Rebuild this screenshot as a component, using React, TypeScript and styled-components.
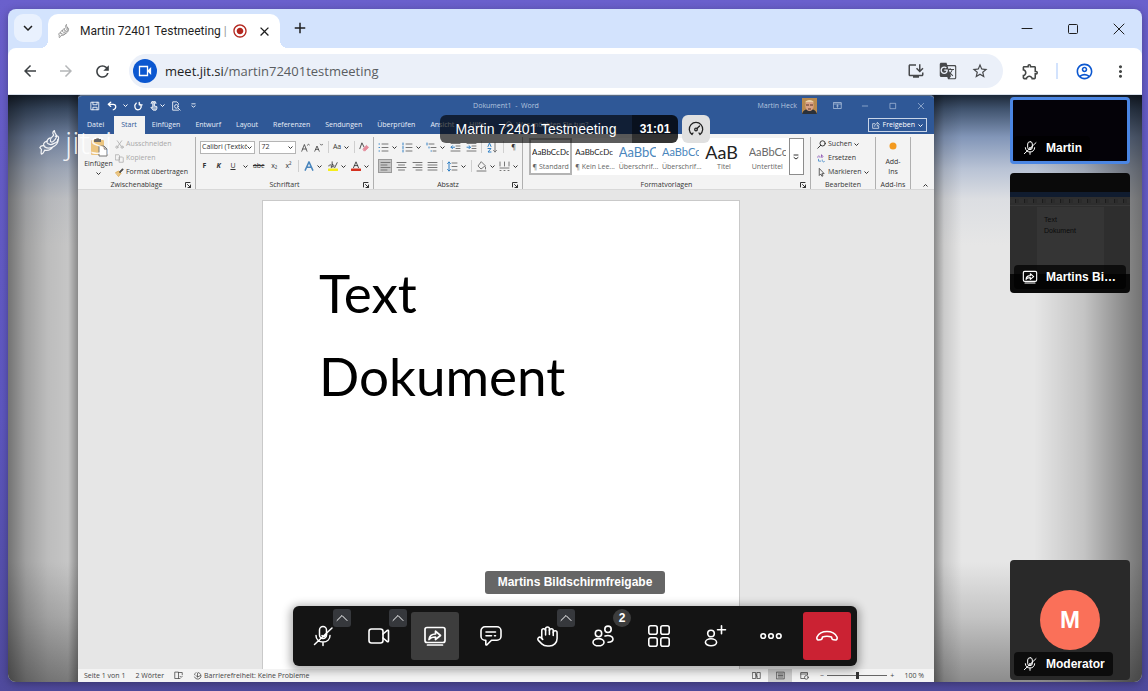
import React from "react";
import styled, { createGlobalStyle, css } from "styled-components";
import {
  MdArrowBack,
  MdArrowForward,
  MdRefresh,
  MdInstallDesktop,
  MdGTranslate,
  MdStarBorder,
  MdOutlineExtension,
  MdOutlineAccountCircle,
  MdMoreVert,
  MdKeyboardArrowDown,
  MdRadioButtonChecked,
  MdClose,
  MdAdd,
} from "react-icons/md";
import { Hand } from "lucide-react";

const ui = `"Open Sans", "Noto Sans", sans-serif`;
const meet = `"Liberation Sans", Arial, sans-serif`;

const GlobalStyle = createGlobalStyle`
  * { box-sizing: border-box; }
  body { margin: 0; font-family: ${ui}; background: #5a53b6; }
  button, input, select { font: inherit; color: inherit; margin: 0; }
  button { border: 0; padding: 0; background: none; cursor: pointer; }
  svg { display: block; flex: none; }
  h1, p, ul { margin: 0; padding: 0; font-weight: inherit; }
`;

/* ---------- window ---------- */

const Desktop = styled.div`
  height: 100vh;
  min-height: 480px;
  padding: 9px 6px 9px 8px;
  display: flex;
  background: linear-gradient(#6a60cc, #5e57c0 60%, #4f4a9c);
`;

const BrowserWindow = styled.div`
  flex: 1;
  min-width: 0;
  display: flex;
  flex-direction: column;
  border-radius: 8px;
  overflow: hidden;
  background: #d3e3fd;
  box-shadow: 0 2px 8px rgba(0, 0, 0, 0.3);
`;

const TabStrip = styled.header`
  height: 39px;
  flex: none;
  display: flex;
  align-items: flex-end;
  padding-left: 6px;
  color: #1f1f1f;
`;

const TabSearch = styled.button`
  width: 28px;
  height: 28px;
  margin: 0 6px 6px 0;
  border-radius: 9px;
  background: #e9f1fe;
  display: grid;
  place-items: center;
`;

const Tab = styled.div`
  position: relative;
  width: 232px;
  height: 34px;
  padding: 0 4px 0 10px;
  display: flex;
  align-items: center;
  gap: 4px;
  border-radius: 10px 10px 0 0;
  background: #fff;
  font-family: Roboto, "Open Sans", sans-serif;
  font-size: 12px;
  &::before,
  &::after {
    content: "";
    position: absolute;
    bottom: 0;
    width: 8px;
    height: 8px;
  }
  &::before {
    left: -8px;
    background: radial-gradient(circle at 0 0, transparent 8px, #fff 8px);
  }
  &::after {
    right: -8px;
    background: radial-gradient(circle at 100% 0, transparent 8px, #fff 8px);
  }
`;

const TabIcon = styled.span`
  color: #8a8a8a;
`;

const TabTitle = styled.span`
  flex: 1;
  margin-left: 4px;
  white-space: nowrap;
  i {
    font-style: normal;
    color: #9a9a9a;
  }
`;

const TabButton = styled.button`
  width: 24px;
  height: 24px;
  display: grid;
  place-items: center;
`;

const NewTab = styled(TabButton)`
  margin: 0 auto 8px 8px;
`;

const WindowControls = styled.div`
  align-self: stretch;
  display: flex;
`;

const WindowButton = styled.button`
  width: 46px;
  display: grid;
  place-items: center;
`;

const AddressRow = styled.div`
  height: 47px;
  flex: none;
  display: flex;
  align-items: center;
  padding: 0 10px;
  background: #fff;
  color: #444746;
  border-radius: 8px 8px 0 0;
  border-bottom: 1px solid #d9e0ea;
`;

const NavButton = styled.button<{ $dim?: boolean }>`
  width: 24px;
  height: 24px;
  margin-right: 12px;
  display: grid;
  place-items: center;
  color: ${(p) => (p.$dim ? "#b4b6b8" : "#3c4043")};
`;

const AddressBar = styled.div`
  flex: 1;
  height: 34px;
  margin-left: 3px;
  padding: 0 14px 0 4px;
  display: flex;
  align-items: center;
  gap: 12px;
  border-radius: 17px;
  background: #ebf0f9;
  color: #47494c;
  font-size: 13px;
`;

const SiteBadge = styled.button`
  width: 24px;
  height: 24px;
  margin-right: -4px;
  border-radius: 50%;
  background: #0b57d0;
  display: grid;
  place-items: center;
`;

const Url = styled.p`
  flex: 1;
  color: #5a5d61;
  b {
    font-weight: 400;
    color: #1f1f1f;
  }
`;

const PageActions = styled.div`
  display: flex;
  align-items: center;
  gap: 14px;
`;

const ToolButtons = styled.div`
  display: flex;
  align-items: center;
  gap: 12px;
  margin-left: 15px;
`;

const BarDivider = styled.span`
  width: 2px;
  height: 16px;
  margin: 0 2px;
  background: #d3e3fd;
`;

const Plain = styled.button<{ $blue?: boolean }>`
  width: 24px;
  height: 24px;
  display: grid;
  place-items: center;
  color: ${(p) => (p.$blue ? "#0b57d0" : "#444746")};
`;

/* ---------- meeting stage ---------- */

const Stage = styled.main`
  position: relative;
  flex: 1;
  min-height: 0;
  display: grid;
  grid-template-columns: 70px minmax(0, 1fr) 208px;
  background: linear-gradient(
    #1c2838 0,
    #40536e 14px,
    #8296b8 42px,
    #b9c3d5 74px,
    #dcdee2 104px,
    #e6e6e6 150px,
    #e6e6e6 calc(100% - 120px),
    #c4c4c4 calc(100% - 65px),
    #8c8c8c 100%
  );
`;

const LeftShade = styled.div`
  background: linear-gradient(
    to right,
    rgba(0, 0, 0, 0.5),
    rgba(0, 0, 0, 0.3) 18px,
    rgba(0, 0, 0, 0.18) 40px,
    rgba(0, 0, 0, 0.14) 60px,
    rgba(0, 0, 0, 0.4)
  );
`;

const Filmstrip = styled.aside`
  padding: 2px 12px 2px 76px;
  display: flex;
  flex-direction: column;
  gap: 9px;
  font-family: ${meet};
  background: linear-gradient(
    to right,
    rgba(0, 0, 0, 0.4),
    rgba(0, 0, 0, 0.12) 10px,
    rgba(0, 0, 0, 0) 28px,
    rgba(0, 0, 0, 0) 100px,
    rgba(0, 0, 0, 0.15) 150px,
    rgba(0, 0, 0, 0.5)
  );
`;

const Tile = styled.section<{ $active?: boolean; $short?: boolean; $last?: boolean }>`
  flex: none;
  height: ${(p) => (p.$short ? "67px" : "120px")};
  display: flex;
  flex-direction: column;
  position: relative;
  border-radius: 4px;
  overflow: hidden;
  background: ${(p) => (p.$active ? "#040208" : p.$last ? "#292929" : "#0a0a0a")};
  ${(p) =>
    p.$active &&
    css`
      border: 3px solid #4b86e3;
    `}
  ${(p) =>
    p.$last &&
    css`
      margin-top: auto;
      align-items: center;
      padding-top: 30px;
    `}
`;

const NameTag = styled.div<{ $inset?: boolean }>`
  position: absolute;
  left: ${(p) => (p.$inset ? "1px" : "4px")};
  bottom: ${(p) => (p.$inset ? "1px" : "4px")};
  max-width: 112px;
  height: 24px;
  padding: 0 8px;
  display: flex;
  align-items: center;
  gap: 8px;
  border-radius: 4px;
  background: rgba(0, 0, 0, 0.7);
  color: #fff;
  font-size: 12px;
  font-weight: 700;
  span {
    overflow: hidden;
    text-overflow: ellipsis;
    white-space: nowrap;
  }
`;

const Avatar = styled.div`
  width: 60px;
  height: 60px;
  border-radius: 50%;
  background: #fa7059;
  color: #fff;
  font-size: 24px;
  font-weight: 700;
  display: grid;
  place-items: center;
`;

const MiniScreen = styled.div`
  margin-top: 19px;
  border-top: 5px solid #101c2f;
  height: 82px;
  background: #2e2e2e;
  color: #0b0b0b;
  display: flex;
  flex-direction: column;
`;

const MiniRibbon = styled.div`
  height: 9px;
  border-bottom: 1px solid #383838;
  background: repeating-linear-gradient(to right, #303030 0 5px, #1c1c1c 5px 6px, #2b2b2b 6px 9px);
  background-size: 100% 4px;
  background-repeat: no-repeat;
  background-position: 0 2px;
`;

const MiniPage = styled.div`
  flex: 1;
  margin: 1px 26px 0 27px;
  padding: 7px 0 0 7px;
  background: #353535;
  font-size: 7px;
  line-height: 11px;
`;

const Overlay = styled.div<{ $top?: boolean }>`
  position: absolute;
  left: 0;
  right: 0;
  ${(p) => (p.$top ? "top: 20px;" : "bottom: 16px;")}
  display: flex;
  flex-direction: ${(p) => (p.$top ? "row" : "column")};
  align-items: center;
  justify-content: center;
  gap: ${(p) => (p.$top ? "4px" : "12px")};
  font-family: ${meet};
  color: #fff;
`;

const Subject = styled.div`
  height: 28px;
  display: flex;
  border-radius: 6px;
  overflow: hidden;
  font-size: 14px;
  line-height: 28px;
`;

const SubjectName = styled.h1`
  width: 192px;
  text-align: center;
  font-size: 14px;
  background: rgba(0, 0, 0, 0.64);
`;

const Timer = styled.span`
  width: 46px;
  text-align: center;
  font-size: 12px;
  font-weight: 700;
  background: rgba(0, 0, 0, 0.8);
`;

const Gauge = styled.button`
  width: 28px;
  height: 28px;
  border-radius: 6px;
  background: #e0e0e0;
  display: grid;
  place-items: center;
`;

const ShareLabel = styled.div`
  width: 180px;
  height: 23px;
  border-radius: 3px;
  background: #666;
  font-size: 12px;
  font-weight: 700;
  line-height: 22px;
  text-align: center;
`;

const CallBar = styled.nav`
  display: flex;
  gap: 8px;
  padding: 6px;
  border-radius: 6px;
  background: #141414;
  box-shadow: 0 2px 8px 3px rgba(0, 0, 0, 0.3);
`;

const CallSlot = styled.div`
  position: relative;
`;

const CallButton = styled.button<{ $on?: boolean; $end?: boolean }>`
  width: 48px;
  height: 48px;
  border-radius: 3px;
  display: grid;
  place-items: center;
  color: #fff;
  background: ${(p) => (p.$end ? "#cb2233" : p.$on ? "#3d3d3d" : "transparent")};
`;

const MoreToggle = styled.button`
  position: absolute;
  top: -3px;
  right: -4px;
  width: 18px;
  height: 18px;
  border-radius: 3px;
  background: #36383c;
  display: grid;
  place-items: center;
`;

const CountBadge = styled.span`
  position: absolute;
  top: -3px;
  right: -4px;
  width: 18px;
  height: 18px;
  border-radius: 50%;
  background: #3d3d3d;
  font-size: 12px;
  font-weight: 700;
  line-height: 18px;
  text-align: center;
`;

const Watermark = styled.a`
  position: absolute;
  left: 31px;
  top: 29px;
  display: flex;
  align-items: center;
  color: rgba(255, 255, 255, 0.9);
  font: 300 32px/36px "Open Sans", sans-serif;
  text-decoration: none;
`;

/* ---------- shared word processor ---------- */

const Word = styled.section`
  min-width: 0;
  display: flex;
  flex-direction: column;
  border-top: 1px solid #5a6a80;
  border-radius: 4px 4px 0 0;
  overflow: hidden;
  background: #e6e6e6;
  color: #333;
  font-size: 7px;
  line-height: 10px;
  white-space: nowrap;
`;

const TitleBar = styled.div`
  height: 19px;
  flex: none;
  display: grid;
  grid-template-columns: 1fr auto 1fr;
  align-items: center;
  background: #2f5897;
  color: #b4c5df;
`;

const QuickAccess = styled.div`
  padding-left: 11px;
  display: flex;
  align-items: center;
  color: #fff;
`;

const QuickButton = styled.button<{ $w: number }>`
  width: ${(p) => p.$w}px;
  height: 16px;
  display: grid;
  place-items: center;
`;

const TitleRight = styled.div`
  display: flex;
  align-items: center;
  justify-content: flex-end;
`;

const UserPhoto = styled.span`
  margin: 0 6px 0 5px;
`;

const MenuRow = styled.div`
  height: 19px;
  flex: none;
  display: flex;
  padding: 1px 7px 0 2px;
  background: #2f5897;
  color: #e9eff8;
`;

const MenuTab = styled.button<{ $on?: boolean }>`
  height: 18px;
  padding: 0 8px 0 7px;
  ${(p) =>
    p.$on &&
    css`
      margin: 0 0 0 2px;
      background: #f3f3f3;
      color: #2f5897;
    `}
`;

const TellMe = styled.span`
  display: flex;
  align-items: center;
  gap: 4px;
  padding-left: 12px;
`;

const ShareButton = styled.button`
  height: 14px;
  margin: 2px 0 0 auto;
  padding: 0 3px;
  display: flex;
  align-items: center;
  gap: 3px;
  border: 1px solid #c9d5e8;
  color: #fff;
`;

const Ribbon = styled.div`
  height: 56px;
  flex: none;
  display: flex;
  padding: 3px 0 0;
  background: #f3f3f3;
  border-bottom: 1px solid #d8d8d8;
`;

const Group = styled.div<{ $w?: number }>`
  ${(p) => (p.$w ? `flex: 0 0 ${p.$w}px;` : "flex: 1 1 0;")}
  min-width: 0;
  display: flex;
  flex-direction: column;
  border-right: 1px solid #b0b0b0;
`;

const GroupBody = styled.div<{ $pad?: number }>`
  flex: 1;
  min-height: 0;
  display: flex;
  padding: 0 ${(p) => p.$pad ?? 4}px;
`;

const GroupLabel = styled.div<{ $plain?: boolean }>`
  height: 9px;
  line-height: 9px;
  display: grid;
  grid-template-columns: ${(p) => (p.$plain ? "1fr" : "10px 1fr 10px")};
  align-items: center;
  text-align: center;
`;

const GroupName = styled.span`
  grid-column: ${(p: { $plain?: boolean }) => (p.$plain ? 1 : 2)};
`;

const Rows = styled.div<{ $gap?: number }>`
  flex: 1;
  min-width: 0;
  display: flex;
  flex-direction: column;
  gap: ${(p) => p.$gap ?? 0}px;
`;

const ToolRow = styled.div`
  height: 14px;
  display: flex;
  align-items: center;
  justify-content: space-between;
  margin-top: 3px;
`;

const BigButton = styled.button`
  flex: 0 0 33px;
  display: flex;
  flex-direction: column;
  align-items: center;
  gap: 2px;
`;

const AddInsButton = styled(BigButton)`
  flex: 1;
`;

const TextCommand = styled.button<{ $off?: boolean }>`
  height: 14px;
  display: flex;
  align-items: center;
  gap: 2px;
  color: ${(p) => (p.$off ? "#a8a8a8" : "#333")};
`;

const Tool = styled.button<{ $on?: boolean }>`
  height: 14px;
  min-width: 9px;
  display: flex;
  align-items: center;
  justify-content: center;
  gap: 3px;
  ${(p) =>
    p.$on &&
    css`
      min-width: 14px;
      background: #c6c6c6;
      outline: 1px solid #9a9a9a;
      outline-offset: -1px;
    `}
`;

const Rule = styled.span`
  width: 1px;
  height: 12px;
  background: #cfcfcf;
`;

const SelectBox = styled.label<{ $w: number }>`
  width: ${(p) => p.$w}px;
  height: 13px;
  display: flex;
  align-items: center;
  padding-right: 2px;
  border: 1px solid #b5b5b5;
  background: #fff;
  select {
    flex: 1;
    min-width: 0;
    height: 11px;
    padding: 0 0 0 1px;
    border: 0;
    appearance: none;
    background: none;
    text-overflow: clip;
  }
`;

const Gallery = styled.div`
  flex: 1;
  min-width: 0;
  height: 37px;
  margin-top: 1px;
  display: flex;
  background: #fff;
`;

const StyleCard = styled.button<{ $on?: boolean }>`
  flex: 1 1 0;
  min-width: 0;
  padding: 0 3px;
  overflow: hidden;
  ${(p) =>
    p.$on &&
    css`
      outline: 2px solid #b4b4b4;
      outline-offset: -2px;
    `}
`;

const Sample = styled.span<{ $size: number; $color: string }>`
  display: block;
  height: 20px;
  overflow: hidden;
  line-height: 22px;
  text-align: left;
  font-family: Lato, sans-serif;
  font-size: ${(p) => p.$size}px;
  color: ${(p) => p.$color};
`;

const SampleName = styled.span`
  display: block;
  line-height: 12px;
  color: #666;
`;

const GalleryMore = styled.button`
  width: 15px;
  border: 1px solid #8c8c8c;
  display: grid;
  place-items: center;
`;

const CollapseRibbon = styled.button`
  flex: 0 0 23px;
  padding: 0 0 1px 12px;
  display: flex;
  align-items: flex-end;
`;

const DocumentArea = styled.div`
  flex: 1;
  min-height: 0;
  display: flex;
  justify-content: center;
  padding: 10px 10px 0 0;
  overflow: hidden;
`;

const Page = styled.article`
  flex: 0 1 478px;
  padding: 50px 0 0 56px;
  border: 1px solid #c9c9c9;
  border-bottom: 0;
  background: #fff;
  color: #000;
  font-family: Lato, Carlito, sans-serif;
  font-size: 53px;
  line-height: 83px;
`;

const StatusBar = styled.footer`
  height: 13px;
  flex: none;
  display: flex;
  align-items: center;
  gap: 10px;
  padding: 0 10px 0 6px;
  background: #f3f3f3;
  color: #444;
`;

const StatusItem = styled.span`
  display: flex;
  align-items: center;
  gap: 2px;
`;

const ViewButtons = styled.div`
  margin-left: auto;
  display: flex;
`;

const ViewButton = styled.button<{ $on?: boolean }>`
  width: 24px;
  height: 13px;
  display: grid;
  place-items: center;
  background: ${(p) => (p.$on ? "#cdcdcd" : "transparent")};
`;

const Zoom = styled.label`
  display: flex;
  align-items: center;
  gap: 3px;
  margin-left: -6px;
  input {
    width: 60px;
    height: 9px;
    appearance: none;
    background: linear-gradient(#666, #666) center / 100% 1px no-repeat;
  }
  input::-webkit-slider-thumb {
    appearance: none;
    width: 3px;
    height: 7px;
    background: #333;
  }
`;

/* ---------- icons ---------- */

type IconProps = { size?: number; box?: number; w?: number; children: React.ReactNode };

const Line = ({ size = 10, box = 12, w = 1, children }: IconProps) => (
  <svg
    width={size}
    height={size}
    viewBox={`0 0 ${box} ${box}`}
    fill="none"
    stroke="currentColor"
    strokeWidth={w}
    strokeLinecap="round"
    strokeLinejoin="round"
    aria-hidden="true"
  >
    {children}
  </svg>
);

const Chev = ({ up }: { up?: boolean }) => (
  <svg width="5" height="5" viewBox="0 0 5 5" fill="none" stroke="currentColor" aria-hidden="true">
    <path d={up ? "M.5 3.5l2-2 2 2" : "M.5 1.5l2 2 2-2"} />
  </svg>
);

const Launcher = () => (
  <Line size={6} box={6}>
    <path d="M.5 5V.5H5M2.5 2.5L5.5 5.5M5.5 3v2.5H3" />
  </Line>
);

const MicOff = ({ size = 24 }: { size?: number }) => (
  <Line size={size} box={24} w={1.5}>
    <rect x="8.5" y="2.500" width="7" height="12" rx="3.5" />
    <path d="M5 11.5c0 4 3 6.5 7 6.5s7-2.5 7-6.5M12 18v3.5M11 11.5c1.5 2 3.5 1 4.5-1M21 4L3.5 20.5" />
  </Line>
);

const ShareScreen = ({ size = 24 }: { size?: number }) => (
  <Line size={size} box={24} w={1.7}>
    <rect x="2" y="3.5" width="20" height="15" rx="2" />
    <path d="M4.5 21h15M6 15.5c.5-4 3-5.500 6.500-5.500V7.200l5 4.300-5 4V13c-3 0-5 .5-6.500 2.500z" />
  </Line>
);

const Camera = () => (
  <Line size={24} box={24} w={1.6}>
    <rect x="2" y="5" width="14" height="14" rx="2.5" />
    <path d="M16 10l4.3-3.6c.6-.4 1.2-.1 1.2.6v10c0 .7-.6 1-1.2.6L16 14" />
  </Line>
);

const ChatBubble = () => (
  <Line size={24} box={24} w={1.6}>
    <path d="M6 2.800h12a4 4 0 0 1 4 4v5.400a4 4 0 0 1-4 4h-5.500L8 20.800c-.5.500-1.200.2-1.200-.5v-4.100H6a4 4 0 0 1-4-4V6.800a4 4 0 0 1 4-4zM7 8h9.500M7 11.700h5.500M15.500 11.700h1" />
  </Line>
);

const People = () => (
  <Line size={24} box={24} w={1.6}>
    <circle cx="7.5" cy="9.5" r="3.2" />
    <ellipse cx="7.5" cy="18.2" rx="5.5" ry="3.6" />
    <circle cx="17" cy="5.3" r="3.2" />
    <path d="M14 12c4-1.500 8 .3 8 3 0 2-2 3.200-5 3.200" />
  </Line>
);

const TileGrid = () => (
  <Line size={24} box={24} w={1.6}>
    <rect x="1.8" y="1.8" width="8.4" height="8.4" rx="2" />
    <rect x="13.8" y="1.8" width="8.4" height="8.4" rx="2" />
    <rect x="1.8" y="13.8" width="8.4" height="8.4" rx="2" />
    <rect x="13.8" y="13.8" width="8.4" height="8.4" rx="2" />
  </Line>
);

const Invite = () => (
  <Line size={24} box={24} w={1.6}>
    <circle cx="8" cy="9.5" r="3.3" />
    <ellipse cx="8" cy="18.3" rx="5.6" ry="3.5" />
    <path d="M18.5 1.8v8M14.5 5.8h8" />
  </Line>
);

const Dots = () => (
  <Line size={24} box={24} w={1.6}>
    <circle cx="4.2" cy="12" r="2.3" />
    <circle cx="12" cy="12" r="2.3" />
    <circle cx="19.8" cy="12" r="2.3" />
  </Line>
);

const HangUp = () => (
  <Line size={24} box={24} w={1.6}>
    <path d="M2 13C4 9 8 7.500 12 7.500s8 1.500 10 5.500c.5 1 0 3-1.300 3l-2.200-.2c-1-.1-1.500-.7-1.700-1.500l-.3-1.300c-3-1-6-1-9 0l-.3 1.300c-.2.8-.7 1.400-1.700 1.500L3.300 16C2 16 1.500 14 2 13z" />
  </Line>
);

const Bird = ({ size = 32, w = 1.2 }: { size?: number; w?: number }) => (
  <Line size={size} box={32} w={w}>
    <path d="M19 2c-3 2-2 4-1 5s-4 3-4 7c0 2 2 3 4 1s5-5 3-8-2-3-2-5z" />
    <path d="M14 11c-3 1-5 3-4 6 1 2 5 3 8 1 3-1 7-3 6-8-1-2-3-2-4-1" />
    <path d="M10 15c-4 1-6 4-3 7 3 2 8 2 12-1 3-2 5-5 4-8M7 21c-3-1-5 0-6 2l2 2c0 2-1 4 0 6 2 0 3-3 4-5 4 1 8-1 10-4" />
  </Line>
);

const Lines = ({ d, on }: { d: string; on?: string }) => (
  <Line size={11} box={11}>
    <path d={d} stroke="#777" />
    {on && <path d={on} stroke="#2f7fc4" />}
  </Line>
);

const Lens = ({ size = 9 }: { size?: number }) => (
  <Line size={size} box={12} w={1.3}>
    <circle cx="7.5" cy="4.5" r="3.5" />
    <path d="M5 7L1 11" />
  </Line>
);

/* ---------- content ---------- */

const menuTabs = [
  "Datei",
  "Start",
  "Einfügen",
  "Entwurf",
  "Layout",
  "Referenzen",
  "Sendungen",
  "Überprüfen",
  "Ansicht",
  "Hilfe",
];

const styleCards = [
  { sample: "AaBbCcDc", name: "¶ Standard", size: 8, color: "#222" },
  { sample: "AaBbCcDc", name: "¶ Kein Lee...", size: 8, color: "#222" },
  { sample: "AaBbC", name: "Überschrif...", size: 13, color: "#4a86bd" },
  { sample: "AaBbCc", name: "Überschrif...", size: 11, color: "#4a86bd" },
  { sample: "AaB", name: "Titel", size: 18, color: "#222" },
  { sample: "AaBbCc", name: "Untertitel", size: 11, color: "#6a6a6a" },
];

const WordTitle = () => (
  <TitleBar>
    <QuickAccess>
      <QuickButton $w={12} aria-label="Speichern">
        <Line><path d="M1.5 1.5h9v9h-9zM3.5 1.5v3h5v-3M3.5 10.5v-3h5v3" /></Line>
      </QuickButton>
      <QuickButton $w={22} aria-label="Rückgängig">
        <Line><path d="M4.5 1.5L1.5 4l3 2.5M1.5 4h6c4 0 4 5.5 0 6.5" strokeWidth="1.5" /></Line>
      </QuickButton>
      <Chev />
      <QuickButton $w={20} aria-label="Wiederholen">
        <Line><path d="M7.500 4.500H11M7.500 4.500V1.500M8 3.500C11.500 6 9.500 10.500 6 10.500S.5 5.500 4 2.500" strokeWidth="1.5" /></Line>
      </QuickButton>
      <QuickButton $w={12} aria-label="Touchmodus">
        <Line><path d="M4.5 7V2.500a1 1 0 0 1 2 0V6l3 .8v2l-1 2.200H5L2.500 8zM2.500 3a3 3 0 0 1 6 0" fill="currentColor" fillOpacity=".5" /></Line>
      </QuickButton>
      <Chev />
      <QuickButton $w={22} aria-label="Seitenansicht">
        <Line><path d="M9 11H2V1h5l2 2v1" /><circle cx="6.5" cy="6.5" r="2.2" /><path d="M8.5 8.5l2.5 2.5" /></Line>
      </QuickButton>
      <QuickButton $w={12} aria-label="Anpassen">
        <Line size={5} box={6}><path d="M1 1h4M1 3.5L3 5l2-1.5" /></Line>
      </QuickButton>
    </QuickAccess>
    <span>Dokument1&nbsp; -&nbsp; Word</span>
    <TitleRight>
      Martin Heck
      <UserPhoto>
        <svg width="15" height="16" viewBox="0 0 15 16" aria-hidden="true">
          <rect width="15" height="16" fill="#b98a4e" />
          <path d="M0 16c1-4 4-5 7.500-5s6.500 1 7.500 5z" fill="#2b3038" />
          <ellipse cx="7.500" cy="7.500" rx="4.200" ry="5.500" fill="#d9a184" />
          <path d="M3 4.500C4 1 11 1 12 4.500L10 4H5z" fill="#e9cfa6" />
          <path d="M4 7h3M8 7h3M6 11h3" stroke="#5b3328" />
        </svg>
      </UserPhoto>
      <QuickButton $w={28} aria-label="Menübandanzeige">
        <Line size={9}><path d="M1 2h10v8H1zM1 4h10M6 8.500V5.500M4.800 6.500L6 5.500l1.200 1" /></Line>
      </QuickButton>
      <QuickButton $w={28} aria-label="Minimieren"><Line size={8}><path d="M2 6h8" /></Line></QuickButton>
      <QuickButton $w={28} aria-label="Maximieren"><Line size={8}><path d="M2 2h8v8H2z" /></Line></QuickButton>
      <QuickButton $w={27} aria-label="Schließen"><Line size={8}><path d="M2 2l8 8M10 2l-8 8" /></Line></QuickButton>
    </TitleRight>
  </TitleBar>
);

const Clipboard = () => (
  <Group $w={118}>
    <GroupBody>
      <BigButton>
        <svg width="20" height="20" viewBox="0 0 20 20" aria-hidden="true">
          <rect x="2" y="3" width="13" height="15" rx="1" fill="#ecc580" />
          <path d="M5 5V2h2c0-2 3-2 3 0h2v3z" fill="#666" />
          <path d="M10 9h5l3 3v7h-8z" fill="#fff" stroke="#777" />
          <path d="M15 9v3h3" fill="none" stroke="#777" />
        </svg>
        Einfügen
        <Chev />
      </BigButton>
      <Rows>
        <TextCommand $off>
          <Line size={9}><path d="M3 1l5 7M9 1L4 8" /><circle cx="2.5" cy="9.5" r="1.5" /><circle cx="9.5" cy="9.5" r="1.5" /></Line>
          Ausschneiden
        </TextCommand>
        <TextCommand $off>
          <Line size={9}><path d="M1 1h4l1 1v6H1zM6 4h4l1 1v6H6z" /></Line>
          Kopieren
        </TextCommand>
        <TextCommand>
          <Line size={9}><path d="M1 6l4-2 3 3-3 4z" fill="#ecc580" stroke="#d9a441" /><path d="M6 5l4-4 1 1-4 4z" fill="#555" /></Line>
          Format übertragen
        </TextCommand>
      </Rows>
    </GroupBody>
    <GroupLabel><GroupName>Zwischenablage</GroupName><Launcher /></GroupLabel>
  </Group>
);

const FontGroup = () => (
  <Group $w={178}>
    <GroupBody>
      <Rows $gap={2}>
        <ToolRow>
          <SelectBox $w={55}>
            <select aria-label="Schriftart" defaultValue="c"><option value="c">Calibri (Textkö</option></select>
            <Chev />
          </SelectBox>
          <SelectBox $w={37}>
            <select aria-label="Schriftgrad" defaultValue="72"><option>72</option></select>
            <Chev />
          </SelectBox>
          <Tool aria-label="Vergrößern"><Line size={9}><path d="M1 11l3.500-9L8 11M2.300 8h4.500M8.500 3L10 1.500 11.500 3" /></Line></Tool>
          <Tool aria-label="Verkleinern"><Line size={9}><path d="M1 11l3-7 3 7M2.300 8.500h3.500M8.500 1.500L10 3l1.500-1.500" /></Line></Tool>
          <Rule />
          <Tool>Aa <Chev /></Tool>
          <Rule />
          <Tool aria-label="Formatierung löschen">
            <Line><path d="M1 8l2.500-7L6 6" /><path d="M5 8l4-4 2.500 2.500-4 4H6z" fill="#e58b9b" stroke="#e58b9b" /></Line>
          </Tool>
        </ToolRow>
        <ToolRow>
          <Tool><b>F</b></Tool>
          <Tool><b><i>K</i></b></Tool>
          <Tool><u>U</u></Tool>
          <Chev />
          <Tool><s>abc</s></Tool>
          <Tool>x₂</Tool>
          <Tool>x²</Tool>
          <Rule />
          <Tool aria-label="Texteffekte">
            <Line><path d="M1.5 11L6 1l4.5 10M3.5 7.5h5" stroke="#4a86bd" strokeWidth="1.8" /></Line>
            <Chev />
          </Tool>
          <Tool aria-label="Texthervorhebung">
            <Line><path d="M1 10.5h10" stroke="#f6ee1a" strokeWidth="3" /><path d="M1 6c0-2 3-2 3 0v2M5 1v6c3 1 3-3 0-3M8 8l3-6" /></Line>
            <Chev />
          </Tool>
          <Tool aria-label="Schriftfarbe">
            <Line><path d="M1 10.5h10" stroke="#d4301f" strokeWidth="3" /><path d="M3 8l3-7 3 7M4 5.5h4" /></Line>
            <Chev />
          </Tool>
        </ToolRow>
      </Rows>
    </GroupBody>
    <GroupLabel><GroupName>Schriftart</GroupName><Launcher /></GroupLabel>
  </Group>
);

const ParagraphGroup = () => (
  <Group $w={149}>
    <GroupBody>
      <Rows $gap={2}>
        <ToolRow>
          <Tool aria-label="Aufzählung"><Lines d="M4 2h6M4 5.5h6M4 9h6" on="M1 2h.5M1 5.5h.5M1 9h.5" /><Chev /></Tool>
          <Tool aria-label="Nummerierung"><Lines d="M4 2h6M4 5.5h6M4 9h6" on="M1 1v2M1 4.5v2M1 8v2" /><Chev /></Tool>
          <Tool aria-label="Liste"><Lines d="M3 2h5M5 5.5h5M7 9h3" on="M1 1v2M3 5v1M5 9h.5" /><Chev /></Tool>
          <Tool aria-label="Einzug verkleinern"><Lines d="M1 1.5h9M6 4h4M6 6.5h4M1 9h9" on="M4.5 5.2H1l1.5-1.5M1 5.2l1.5 1.5" /></Tool>
          <Tool aria-label="Einzug vergrößern"><Lines d="M1 1.5h9M6 4h4M6 6.5h4M1 9h9" on="M1 5.2h3.5L3 3.7M4.5 5.2L3 6.7" /></Tool>
          <Rule />
          <Tool aria-label="Sortieren"><Lines d="M8 1v9M6.5 8.5L8 10l1.5-1.5" on="M1 4.5L2.5 1 4 4.5M1 6.5h3l-3 3.5h3" /></Tool>
          <Rule />
          <Tool>¶</Tool>
        </ToolRow>
        <ToolRow>
          <Tool $on aria-label="Linksbündig"><Lines d="M1 1.5h9M1 4h6M1 6.5h9M1 9h6" /></Tool>
          <Tool aria-label="Zentriert"><Lines d="M1 1.5h9M2.5 4h6M1 6.5h9M2.5 9h6" /></Tool>
          <Tool aria-label="Rechtsbündig"><Lines d="M1 1.5h9M4 4h6M1 6.5h9M4 9h6" /></Tool>
          <Tool aria-label="Blocksatz"><Lines d="M1 1.5h9M1 4h9M1 6.5h9M1 9h9" /></Tool>
          <Rule />
          <Tool aria-label="Zeilenabstand"><Lines d="M5 2h5M5 5.5h5M5 9h5" on="M2 1v9M.5 2.5L2 1l1.5 1.5M.5 8.5L2 10l1.5-1.5" /><Chev /></Tool>
          <Rule />
          <Tool aria-label="Schattierung"><Lines d="M5 1L2 5l3 3 4-3zM9.5 6v2M1 10h9" /><Chev /></Tool>
          <Tool aria-label="Rahmen"><Lines d="M1 1v4M5.5 1v4M10 1v4M1 7h9M1 9.5h1M5 9.5h1M9 9.5h1" /><Chev /></Tool>
        </ToolRow>
      </Rows>
    </GroupBody>
    <GroupLabel><GroupName>Absatz</GroupName><Launcher /></GroupLabel>
  </Group>
);

const WordRibbon = () => (
  <Ribbon>
    <Clipboard />
    <FontGroup />
    <ParagraphGroup />
    <Group>
      <GroupBody $pad={6}>
        <Gallery>
          {styleCards.map((c, i) => (
            <StyleCard key={i} $on={i === 0}>
              <Sample $size={c.size} $color={c.color}>{c.sample}</Sample>
              <SampleName>{c.name}</SampleName>
            </StyleCard>
          ))}
          <GalleryMore aria-label="Mehr"><Line size={6} box={6}><path d="M1 1h4M1 3.5L3 5l2-1.5" /></Line></GalleryMore>
        </Gallery>
      </GroupBody>
      <GroupLabel><GroupName>Formatvorlagen</GroupName><Launcher /></GroupLabel>
    </Group>
    <Group $w={65}>
      <GroupBody $pad={6}>
        <Rows>
          <TextCommand><Lens />Suchen <Chev /></TextCommand>
          <TextCommand>
            <Line size={9}><path d="M1 4.500c0-3 3-3 3 0M6 1v3.500c3 0 3-2.500 0-2.500" stroke="#8a4fb0" /><path d="M2 7v2.500h3M7 8c0 3 2 3 3 2" stroke="#2f7fc4" /></Line>
            Ersetzen
          </TextCommand>
          <TextCommand>
            <Line size={9}><path d="M3 1v9l2-2 1.500 3L8 10.500 6.500 7.500H9z" /></Line>
            Markieren <Chev />
          </TextCommand>
        </Rows>
      </GroupBody>
      <GroupLabel $plain><GroupName $plain>Bearbeiten</GroupName></GroupLabel>
    </Group>
    <Group $w={35}>
      <GroupBody>
        <AddInsButton>
          <svg width="18" height="18" viewBox="0 0 18 18" aria-hidden="true"><circle cx="9" cy="9" r="3.5" fill="#f39a1f" /></svg>
          <span>Add-<br />Ins</span>
        </AddInsButton>
      </GroupBody>
      <GroupLabel $plain><GroupName $plain>Add-Ins</GroupName></GroupLabel>
    </Group>
    <CollapseRibbon aria-label="Menüband reduzieren"><Chev up /></CollapseRibbon>
  </Ribbon>
);

const SharedScreen = () => (
  <Word>
    <WordTitle />
    <MenuRow>
      {menuTabs.map((t) => (
        <MenuTab key={t} $on={t === "Start"}>{t}</MenuTab>
      ))}
      <TellMe><Lens size={8} />Was möchten Sie tun?</TellMe>
      <ShareButton>
        <Line size={8}><path d="M4 4H1v7h9V8M4 8c0-3 2-4 4-4V2l3 3-3 3V6" /></Line>
        Freigeben
        <Chev />
      </ShareButton>
    </MenuRow>
    <WordRibbon />
    <DocumentArea>
      <Page>
        <p>Text</p>
        <p>Dokument</p>
      </Page>
    </DocumentArea>
    <StatusBar>
      <span>Seite 1 von 1</span>
      <span>2 Wörter</span>
      <StatusItem><Line size={9}><path d="M6 2v8H1V2zM6 2h5v3M6 10h2M8 7l1.5 1.5L11 7" /></Line></StatusItem>
      <StatusItem>
        <Line size={9}><path d="M7 2a4.500 4.500 0 1 1-5 6M2 5a5 5 0 0 1 2-3M6 3v5M4 6l2 2 4-2" /></Line>
        Barrierefreiheit: Keine Probleme
      </StatusItem>
      <ViewButtons>
        <ViewButton aria-label="Lesemodus"><Line size={9}><path d="M1 2h4v8H1zM7 2h4v8H7zM5 4l2 4" /></Line></ViewButton>
        <ViewButton $on aria-label="Seitenlayout"><Line size={9}><path d="M1 1.5h10v9H1zM3 4h6M3 6h6M3 8h6" /></Line></ViewButton>
        <ViewButton aria-label="Weblayout"><Line size={9}><path d="M6 10H1V2h9v3M1 4h9" /><circle cx="8.5" cy="8.5" r="2.5" /></Line></ViewButton>
      </ViewButtons>
      <Zoom>
        −
        <input type="range" min={0} max={200} defaultValue={100} aria-label="Zoom" />
        +
      </Zoom>
      <span>100 %</span>
    </StatusBar>
  </Word>
);

type CallItem = {
  label: string;
  icon: React.ReactNode;
  more?: boolean;
  on?: boolean;
  end?: boolean;
  count?: number;
};

const callButtons: CallItem[] = [
  { label: "Mikrofon", icon: <MicOff />, more: true },
  { label: "Kamera", icon: <Camera />, more: true },
  { label: "Bildschirmfreigabe", icon: <ShareScreen />, on: true },
  { label: "Chat", icon: <ChatBubble /> },
  { label: "Hand heben", icon: <Hand size={23} strokeWidth={1.6} />, more: true },
  { label: "Anwesende", icon: <People />, count: 2 },
  { label: "Kachelansicht", icon: <TileGrid /> },
  { label: "Einladen", icon: <Invite /> },
  { label: "Weitere Aktionen", icon: <Dots /> },
  { label: "Auflegen", icon: <HangUp />, end: true },
];

export default function App() {
  return (
    <Desktop>
      <GlobalStyle />
      <BrowserWindow>
        <TabStrip>
          <TabSearch aria-label="Tabs durchsuchen"><MdKeyboardArrowDown size={18} /></TabSearch>
          <Tab>
            <TabIcon><Bird size={14} w={2} /></TabIcon>
            <TabTitle>Martin 72401 Testmeeting <i>|</i></TabTitle>
            <MdRadioButtonChecked size={16} color="#b3261e" />
            <TabButton aria-label="Tab schließen"><MdClose size={15} /></TabButton>
          </Tab>
          <NewTab aria-label="Neuer Tab"><MdAdd size={18} /></NewTab>
          <WindowControls>
            <WindowButton aria-label="Minimieren"><Line size={12}><path d="M1 5.5h10" /></Line></WindowButton>
            <WindowButton aria-label="Maximieren"><Line size={12}><rect x="1.5" y="1.5" width="9" height="9" rx="1" /></Line></WindowButton>
            <WindowButton aria-label="Schließen"><Line size={12}><path d="M1 1l10 10M11 1L1 11" /></Line></WindowButton>
          </WindowControls>
        </TabStrip>
        <AddressRow>
          <NavButton aria-label="Zurück"><MdArrowBack size={18} /></NavButton>
          <NavButton $dim aria-label="Vorwärts"><MdArrowForward size={18} /></NavButton>
          <NavButton aria-label="Neu laden"><MdRefresh size={19} /></NavButton>
          <AddressBar>
            <SiteBadge aria-label="Kamera wird verwendet">
              <svg width="14" height="12" viewBox="0 0 14 12" fill="none" stroke="#fff" strokeWidth="1.3" aria-hidden="true">
                <path d="M1.500 1.500h8v9h-8z" />
                <path d="M10.500 5.500L12.500 3.500v5L10.500 6.500z" fill="#fff" />
              </svg>
            </SiteBadge>
            <Url><b>meet.jit.si</b>/martin72401testmeeting</Url>
            <PageActions>
              <MdInstallDesktop size={18} />
              <MdGTranslate size={18} />
              <MdStarBorder size={18} />
            </PageActions>
          </AddressBar>
          <ToolButtons>
            <Plain aria-label="Erweiterungen"><MdOutlineExtension size={19} /></Plain>
            <BarDivider />
            <Plain $blue aria-label="Profil"><MdOutlineAccountCircle size={19} /></Plain>
            <Plain aria-label="Menü"><MdMoreVert size={19} /></Plain>
          </ToolButtons>
        </AddressRow>
        <Stage>
          <LeftShade />
          <SharedScreen />
          <Filmstrip>
            <Tile $active $short>
              <NameTag $inset><MicOff size={16} /><span>Martin</span></NameTag>
            </Tile>
            <Tile>
              <MiniScreen>
                <MiniRibbon />
                <MiniPage>Text<br />Dokument</MiniPage>
              </MiniScreen>
              <NameTag><ShareScreen size={16} /><span>Martins Bildschirmfreigabe</span></NameTag>
            </Tile>
            <Tile $last>
              <Avatar>M</Avatar>
              <NameTag><MicOff size={16} /><span>Moderator</span></NameTag>
            </Tile>
          </Filmstrip>
          <Watermark href="#jitsi"><Bird size={26} w={1.5} />jitsi</Watermark>
          <Overlay $top>
            <Subject>
              <SubjectName>Martin 72401 Testmeeting</SubjectName>
              <Timer>31:01</Timer>
            </Subject>
            <Gauge aria-label="Leistung">
              <svg width="18" height="18" viewBox="0 0 18 18" fill="none" stroke="#222" strokeWidth="1.3" strokeLinecap="round" aria-hidden="true">
                <path d="M5 14.500a6.700 6.700 0 1 1 8 0M6 13l-1 1.500M12 13l1 1.500" />
                <circle cx="9" cy="9.5" r="1.3" />
                <path d="M10 8.5L12.5 6" />
              </svg>
            </Gauge>
          </Overlay>
          <Overlay>
            <ShareLabel>Martins Bildschirmfreigabe</ShareLabel>
            <CallBar aria-label="Besprechung">
              {callButtons.map((b) => (
                <CallSlot key={b.label}>
                  <CallButton $on={b.on} $end={b.end} aria-label={b.label}>{b.icon}</CallButton>
                  {b.more && (
                    <MoreToggle aria-label={`${b.label} Optionen`}>
                      <Line size={12}><path d="M1 8.500l5-5 5 5" /></Line>
                    </MoreToggle>
                  )}
                  {b.count && <CountBadge>{b.count}</CountBadge>}
                </CallSlot>
              ))}
            </CallBar>
          </Overlay>
        </Stage>
      </BrowserWindow>
    </Desktop>
  );
}
